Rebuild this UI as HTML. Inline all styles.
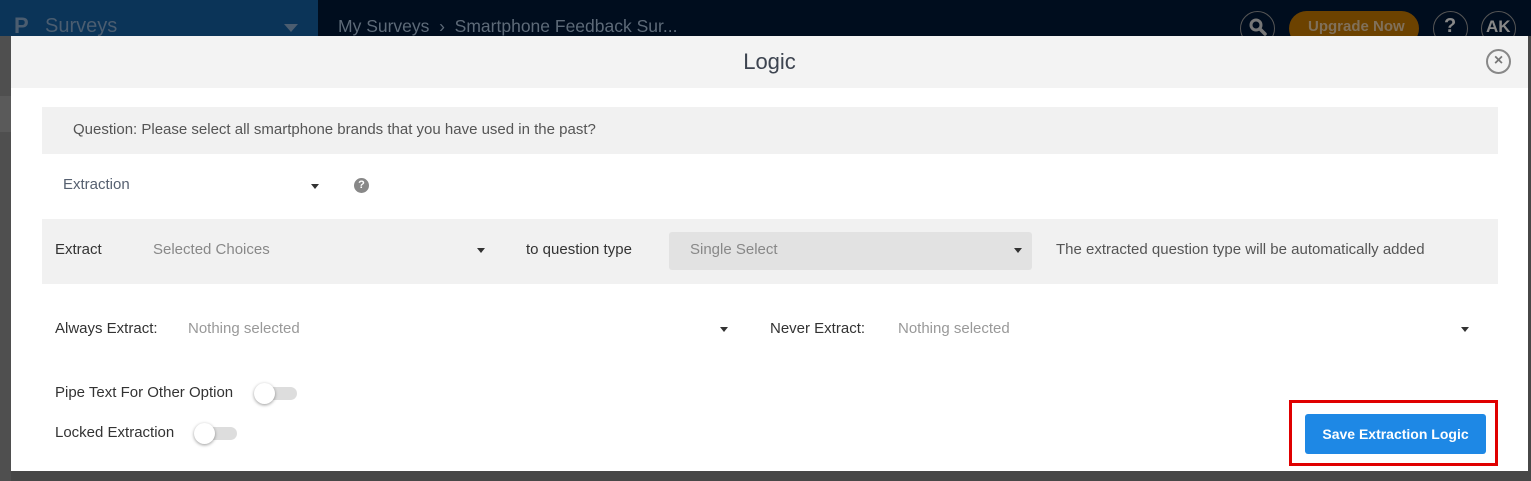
<!DOCTYPE html>
<html><head><meta charset="utf-8"><style>
*{box-sizing:border-box;margin:0;padding:0}
body{width:1531px;height:481px;overflow:hidden;background:#474747;font-family:"Liberation Sans",sans-serif;position:relative;font-size:15px}
.abs{position:absolute}
.top{left:0;top:0;width:1531px;height:36px;background:#000d1e}
.topl{left:0;top:0;width:318px;height:36px;background:#0b3458}
.modal{left:11px;top:36px;width:1517px;height:435px;background:#fff}
.hdr{left:0;top:0;width:1517px;height:52px;background:#f3f3f3}
.t{position:absolute;white-space:nowrap}
.caret{position:absolute;width:0;height:0;border-left:4px solid transparent;border-right:4px solid transparent;border-top:5px solid #333}
.tog{position:absolute;width:40px;height:13px;border-radius:7px;background:#ddd}
.tog::before{content:"";position:absolute;left:-3px;top:-4px;width:21px;height:21px;border-radius:50%;background:#fff;box-shadow:0 1px 3px rgba(0,0,0,.4)}
</style></head><body>
<div class="abs" style="left:0;top:36px;width:11px;height:445px;background:#4f4f4f"></div>
<div class="abs" style="left:0;top:96px;width:11px;height:36px;background:#5a5a5a"></div>
<div class="abs top"></div><div class="abs topl"></div>
<div class="t" style="left:14px;top:13px;color:#4b5d70;font-size:22px;font-weight:bold">P</div>
<div class="t" style="left:45px;top:15px;color:#4b5d70;font-size:20px">Surveys</div>
<div class="caret" style="left:284px;top:24px;border-left-width:7px;border-right-width:7px;border-top:8px solid #4b5d70"></div>
<div class="t" style="left:338px;top:16px;color:#5d6a78;font-size:17.5px">My Surveys &nbsp;›&nbsp; Smartphone Feedback Sur...</div>
<div class="abs" style="left:1240px;top:11px;width:35px;height:35px;border:1px solid #555;border-radius:50%"></div>
<svg class="abs" style="left:1246px;top:15px" width="24" height="24" viewBox="0 0 24 24"><circle cx="10" cy="10" r="5" fill="none" stroke="#777" stroke-width="3"/><line x1="14" y1="14" x2="19" y2="19" stroke="#777" stroke-width="3.5" stroke-linecap="round"/></svg>
<div class="abs" style="left:1289px;top:11px;width:130px;height:35px;background:#6c4200;border-radius:18px"></div>
<div class="t" style="left:1308px;top:18px;color:#80705a;font-size:15px;font-weight:bold">Upgrade Now</div>
<div class="abs" style="left:1433px;top:11px;width:35px;height:35px;border:1px solid #555;border-radius:50%"></div>
<div class="t" style="left:1444px;top:15px;color:#888;font-size:20px;font-weight:bold">?</div>
<div class="abs" style="left:1481px;top:11px;width:35px;height:35px;border:1px solid #555;border-radius:50%"></div>
<div class="t" style="left:1486px;top:17px;color:#888;font-size:17px;font-weight:bold">AK</div>

<div class="abs modal">
 <div class="abs hdr"></div>
 <div class="t" style="left:0;width:1517px;text-align:center;top:13px;font-size:22px;color:#3d4450">Logic</div>
 <div class="abs" style="left:1475px;top:13px;width:25px;height:25px;border:2px solid #888;border-radius:50%;color:#777;font-size:16px;font-weight:bold;text-align:center;line-height:20px">×</div>

 <div class="abs" style="left:31px;top:71px;width:1456px;height:47px;background:#f1f1f1"></div>
 <div class="t" style="left:62px;top:85px;color:#555">Question: Please select all smartphone brands that you have used in the past?</div>

 <div class="t" style="left:52px;top:140px;color:#566070">Extraction</div>
 <div class="caret" style="left:300px;top:148px"></div>
 <div class="abs" style="left:343px;top:142px;width:15px;height:15px;border-radius:50%;background:#888;color:#fff;font-size:11px;font-weight:bold;text-align:center;line-height:15px">?</div>

 <div class="abs" style="left:31px;top:183px;width:1456px;height:65px;background:#f1f1f1"></div>
 <div class="t" style="left:44px;top:205px;color:#333">Extract</div>
 <div class="t" style="left:142px;top:205px;color:#888">Selected Choices</div>
 <div class="caret" style="left:466px;top:212px"></div>
 <div class="t" style="left:515px;top:205px;color:#333">to question type</div>
 <div class="abs" style="left:658px;top:196px;width:363px;height:38px;background:#e2e2e2;border-radius:3px"></div>
 <div class="t" style="left:679px;top:205px;color:#888">Single Select</div>
 <div class="caret" style="left:1003px;top:212px"></div>
 <div class="t" style="left:1045px;top:205px;color:#555">The extracted question type will be automatically added</div>

 <div class="t" style="left:44px;top:284px;color:#333">Always Extract:</div>
 <div class="t" style="left:177px;top:284px;color:#999">Nothing selected</div>
 <div class="caret" style="left:709px;top:291px"></div>
 <div class="t" style="left:759px;top:284px;color:#333">Never Extract:</div>
 <div class="t" style="left:887px;top:284px;color:#999">Nothing selected</div>
 <div class="caret" style="left:1450px;top:291px"></div>

 <div class="t" style="left:44px;top:348px;color:#333">Pipe Text For Other Option</div>
 <div class="tog" style="left:246px;top:351px"></div>
 <div class="t" style="left:44px;top:388px;color:#333">Locked Extraction</div>
 <div class="tog" style="left:186px;top:391px"></div>

 <div class="abs" style="left:1278px;top:364px;width:209px;height:66px;border:3px solid #e00000"></div>
 <div class="abs" style="left:1294px;top:378px;width:181px;height:40px;background:#1e88e5;border-radius:3px;color:#fff;font-weight:bold;font-size:14px;text-align:center;line-height:40px">Save Extraction Logic</div>
</div>
</body></html>
